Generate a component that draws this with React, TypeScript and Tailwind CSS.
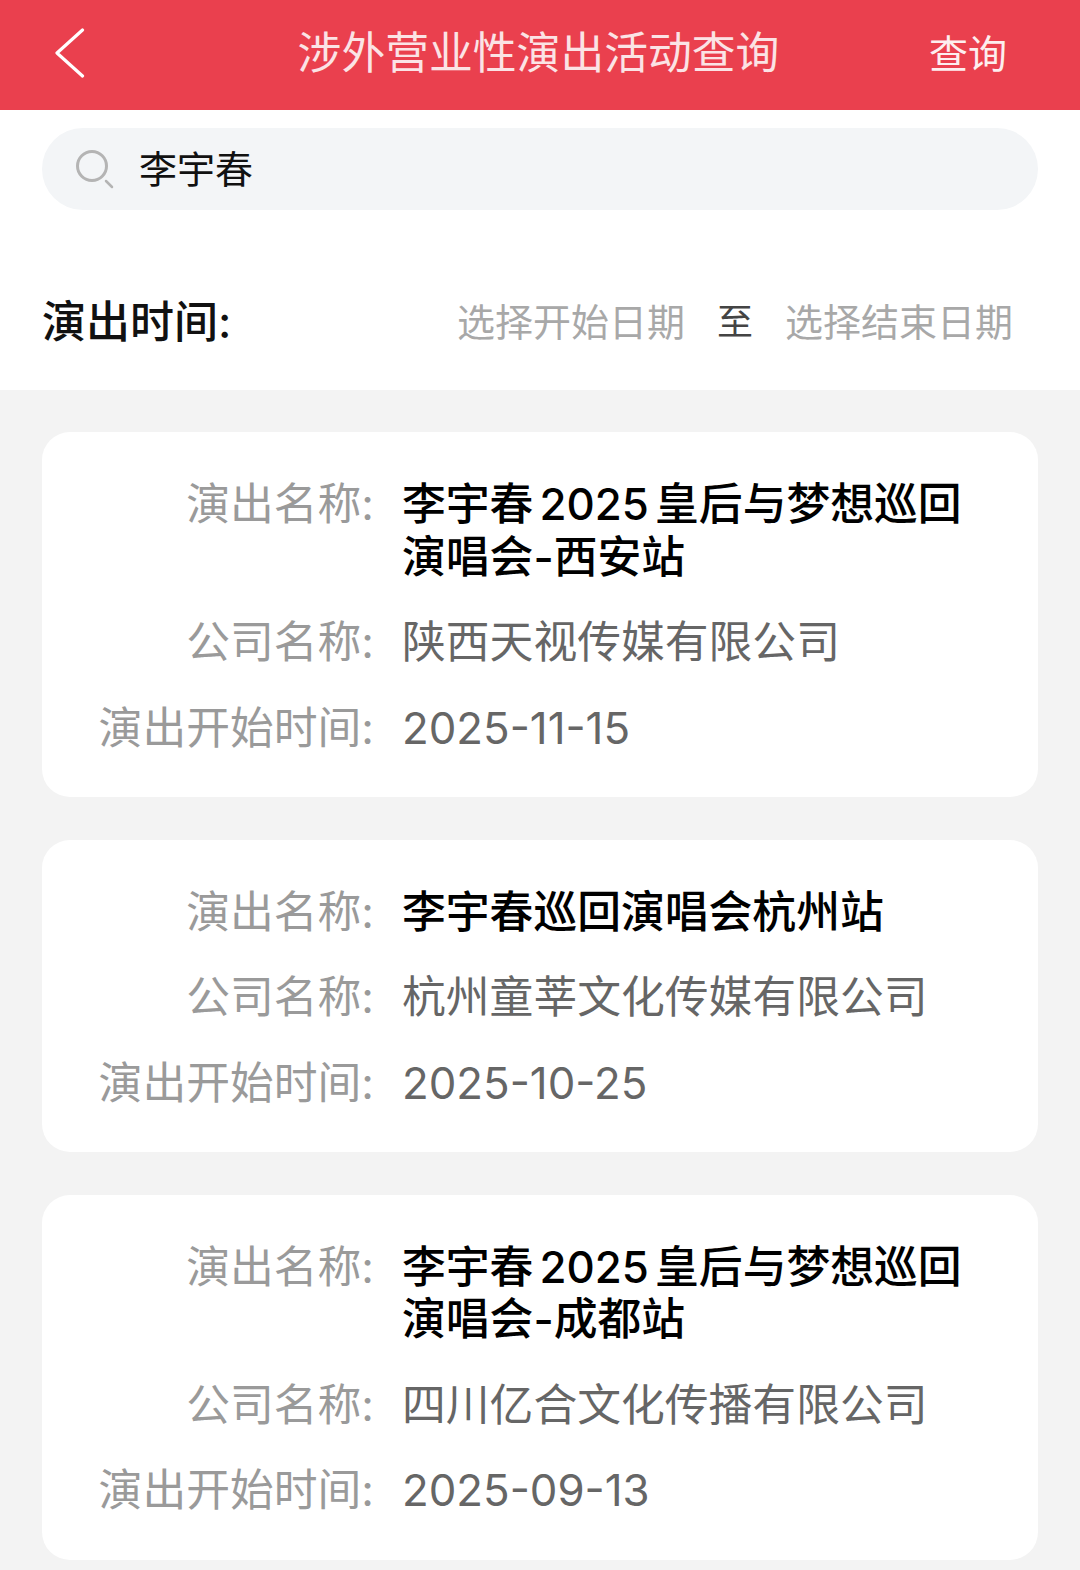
const items = [
  { name: ["李宇春 2025 皇后与梦想巡回", "演唱会-西安站"], company: "陕西天视传媒有限公司", date: "2025-11-15" },
  { name: ["李宇春巡回演唱会杭州站"], company: "杭州童莘文化传媒有限公司", date: "2025-10-25" },
  { name: ["李宇春 2025 皇后与梦想巡回", "演唱会-成都站"], company: "四川亿合文化传播有限公司", date: "2025-09-13" },
];

function Row({ label, children }: { label: string; children: React.ReactNode }) {
  return (
    <div className="flex gap-[28px]">
      <div className="w-[332px] shrink-0 text-right text-[#9a9a9a]">{label}</div>
      <div className="min-w-0 flex-1">{children}</div>
    </div>
  );
}

export default function App() {
  return (
    <div className="flex h-[1570px] w-[1080px] flex-col overflow-hidden bg-[#f3f3f3] font-['Inter','Noto_Sans_CJK_SC',sans-serif]">
      <header className="grid h-[110px] grid-cols-[1fr_auto_1fr] items-center bg-[#ea404e] pb-[4px] text-white">
        <div className="pl-[55px]">
          <svg className="block" width="30" height="52" viewBox="0 0 30 52" fill="none" stroke="#fff" strokeWidth="3.2" strokeLinecap="round" strokeLinejoin="round">
            <path d="M27.5 3 L2 26 L27.5 49" />
          </svg>
        </div>
        <h1 className="mr-[3px] text-[43.8px] leading-[53px] font-normal text-[#fbe3e5]">涉外营业性演出活动查询</h1>
        <div className="pr-[73px] text-right text-[39px] leading-[49px] text-[#fdeeef]">查询</div>
      </header>

      <section className="h-[280px] bg-white px-[42px] pt-[18px]">
        <div className="flex h-[82px] items-center rounded-full bg-[#f3f5f7] pl-[33px]">
          <svg width="40" height="40" viewBox="0 0 40 40" fill="none" stroke="#b4b4b4" strokeLinecap="round">
            <circle cx="17" cy="17" r="14.5" strokeWidth="3" />
            <path d="M31 32 L37 38" strokeWidth="2.5" />
          </svg>
          <span className="ml-[24px] text-[38px] leading-[46px] text-[#111]">李宇春</span>
        </div>
        <div className="mt-[85px] flex h-[54px] items-center">
          <span className="text-[44px] font-medium text-[#111]">演出时间:</span>
          <div className="ml-auto flex items-center pr-[25px] text-[38px]">
            <span className="text-[#a8a8a8]">选择开始日期</span>
            <span className="mx-[32px] text-[36px] text-[#444]">至</span>
            <span className="text-[#a8a8a8]">选择结束日期</span>
          </div>
        </div>
      </section>

      <main className="flex flex-col gap-[42.5px] px-[42px] pt-[42px]">
        {items.map((item) => (
          <article key={item.date} className="flex flex-col gap-[33px] rounded-[28px] bg-white pt-[47px] pb-[42px] text-[43.8px] leading-[52.5px]">
            <Row label="演出名称:">
              <div className="font-medium text-black [word-spacing:-5.5px]">
                {item.name.map((line) => (
                  <div key={line}>{line}</div>
                ))}
              </div>
            </Row>
            <Row label="公司名称:">
              <div className="text-[#666]">{item.company}</div>
            </Row>
            <Row label="演出开始时间:">
              <div className="text-[#666]">{item.date}</div>
            </Row>
          </article>
        ))}
      </main>
    </div>
  );
}
